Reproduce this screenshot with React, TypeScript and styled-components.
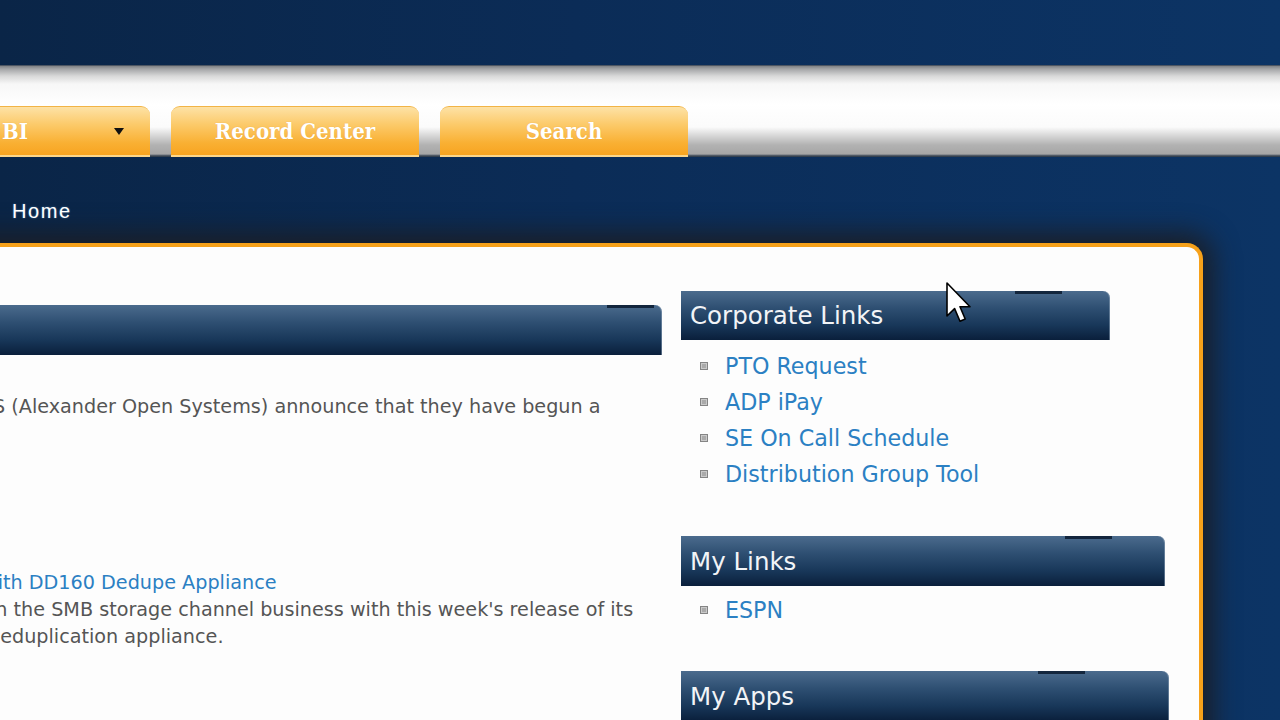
import React from "react";
import styled, { createGlobalStyle } from "styled-components";

const GlobalStyle = createGlobalStyle`
  html, body { margin: 0; padding: 0; background: #0b2a52; overflow: hidden; }
  * { box-sizing: border-box; }
`;

const Page = styled.div`
  position: relative;
  width: 1280px;
  height: 720px;
  overflow: hidden;
  background: linear-gradient(90deg, #0a2547 0%, #0b2c57 45%, #0c3465 100%);
  font-family: "DejaVu Sans", Verdana, sans-serif;
`;

const TopBand = styled.div`
  height: 65px;
`;

const NavBar = styled.div`
  height: 92px;
  display: flex;
  align-items: flex-end;
  gap: 21px;
  background: linear-gradient(
    180deg,
    #1a2a40 0px,
    #808285 1px,
    #a4a5a7 4px,
    #d8d8d8 11px,
    #f7f7f7 19px,
    #ffffff 40px,
    #fbfbfb 62px,
    #dadada 70px,
    #b2b2b2 80px,
    #a6a6a6 89px,
    #33404f 91px
  );
`;

const Tab = styled.div<{ $first?: boolean }>`
  flex: 0 0 248px;
  height: 51px;
  margin-left: ${(p) => (p.$first ? "-98px" : "0")};
  display: flex;
  align-items: center;
  justify-content: ${(p) => (p.$first ? "space-between" : "center")};
  padding: ${(p) => (p.$first ? "0 26px 0 100px" : "0")};
  border-radius: 9px 9px 0 0;
  border-top: 1px solid #f2b445;
  border-bottom: 2px solid #fcd68a;
  background: linear-gradient(180deg, #fde2a6 0%, #fccb6c 35%, #f9b033 75%, #f8a420 100%);
  color: #ffffff;
  font-family: "DejaVu Serif", "Liberation Serif", serif;
  font-stretch: condensed;
  font-weight: bold;
  font-size: 22px;
  text-shadow: 0 0 1px rgba(200, 120, 20, 0.4);
`;

const Caret = styled.span`
  width: 0;
  height: 0;
  border-left: 5px solid transparent;
  border-right: 5px solid transparent;
  border-top: 7px solid #111;
`;

const Crumbs = styled.div`
  height: 86px;
  padding: 41px 0 0 12px;
  color: #ffffff;
  font-family: "Liberation Sans", Arial, sans-serif;
  font-size: 20px;
  letter-spacing: 1.6px;
  line-height: 26px;
  text-shadow: 0 0 2px rgba(120, 180, 230, 0.6);
`;

const Panel = styled.div`
  margin-left: -20px;
  width: 1223px;
  height: 520px;
  border: 4px solid #f6a11a;
  border-bottom: none;
  border-left: none;
  border-top-right-radius: 16px;
  background: #fdfdfd;
  box-shadow: 0 0 26px 10px #1b1f27;
`;

const Columns = styled.div`
  display: grid;
  grid-template-columns: 682px 488px;
  column-gap: 19px;
`;

const Main = styled.div`
  padding-top: 58px;
  color: #555555;
  font-size: 19.2px;
  line-height: 27px;
`;

const WebPartHeader = styled.div<{ $width: number; $notch: number; $h?: number }>`
  position: relative;
  width: ${(p) => p.$width}px;
  height: ${(p) => p.$h ?? 49}px;
  display: flex;
  align-items: center;
  padding-left: 9px;
  border-top-right-radius: 7px;
  background: linear-gradient(180deg, #4b6b8d 0%, #2e4f72 35%, #183759 70%, #0a1f3b 100%);
  box-shadow: inset -1px 0 0 rgba(150, 170, 190, 0.5);
  color: #f2f4f7;
  font-size: 24.5px;
  &::before {
    content: "";
    position: absolute;
    top: 0;
    right: ${(p) => p.$notch}px;
    width: 47px;
    height: 3px;
    background: #13263d;
  }
`;

const Line = styled.div<{ $shift: number; $gap?: number }>`
  margin-left: ${(p) => p.$shift}px;
  margin-top: ${(p) => p.$gap ?? 0}px;
  white-space: nowrap;
`;

const BlueLink = styled.a`
  color: #2b80c3;
  text-decoration: none;
`;

const Side = styled.div`
  padding-top: 44px;
`;

const LinkList = styled.ul<{ $top: number; $bottom: number }>`
  list-style: none;
  margin: ${(p) => p.$top}px 0 ${(p) => p.$bottom}px;
  padding: 0;
`;

const LinkItem = styled.li`
  height: 36px;
  display: flex;
  align-items: center;
  gap: 17px;
  padding-left: 19px;
  font-size: 22.2px;
`;

const Bullet = styled.span`
  flex: 0 0 8px;
  width: 8px;
  height: 8px;
  background: #aaaaaa;
  border: 1px solid #858585;
  box-shadow: inset 0 0 0 1px #cacaca;
`;

const Cursor = styled.svg`
  position: absolute;
  left: 946px;
  top: 282px;
`;

const corporate = ["PTO Request", "ADP iPay", "SE On Call Schedule", "Distribution Group Tool"];

export default function App() {
  return (
    <Page>
      <GlobalStyle />
      <TopBand />
      <NavBar>
        <Tab $first>
          <span>BI</span>
          <Caret />
        </Tab>
        <Tab>Record Center</Tab>
        <Tab>Search</Tab>
      </NavBar>
      <Crumbs>Home</Crumbs>
      <Panel>
        <Columns>
          <Main>
            <WebPartHeader $width={682} $notch={8} $h={50} />
            <Line $shift={13} $gap={38}>
              S (Alexander Open Systems) announce that they have begun a
            </Line>
            <Line $shift={2} $gap={149}>
              <BlueLink href="#">with DD160 Dedupe Appliance</BlueLink>
            </Line>
            <Line $shift={10}>in the SMB storage channel business with this week's release of its</Line>
            <Line $shift={8}>deduplication appliance.</Line>
          </Main>
          <Side>
            <WebPartHeader $width={429} $notch={48}>Corporate Links</WebPartHeader>
            <LinkList $top={8} $bottom={44}>
              {corporate.map((t) => (
                <LinkItem key={t}>
                  <Bullet />
                  <BlueLink href="#">{t}</BlueLink>
                </LinkItem>
              ))}
            </LinkList>
            <WebPartHeader $width={484} $notch={53} $h={50}>My Links</WebPartHeader>
            <LinkList $top={6} $bottom={43}>
              <LinkItem>
                <Bullet />
                <BlueLink href="#">ESPN</BlueLink>
              </LinkItem>
            </LinkList>
            <WebPartHeader $width={488} $notch={84} $h={50}>My Apps</WebPartHeader>
          </Side>
        </Columns>
      </Panel>
      <Cursor width="25" height="41" viewBox="0 0 12.5 20.5">
        <path
          d="M0.5 0.5 L0.5 17 L4.3 13.3 L7 19.6 L9.6 18.5 L7 12.4 L12 12.4 Z"
          fill="#ffffff"
          stroke="#000000"
          strokeWidth="0.8"
          strokeLinejoin="round"
        />
      </Cursor>
    </Page>
  );
}
